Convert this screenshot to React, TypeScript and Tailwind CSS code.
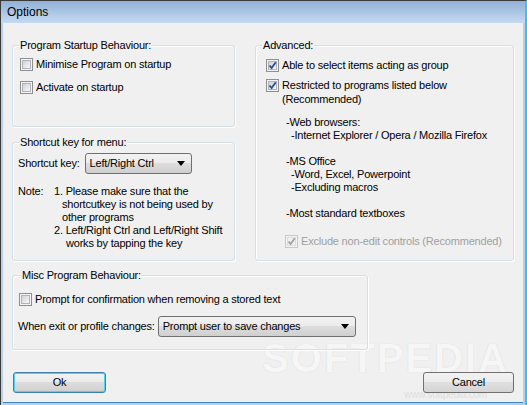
import React from 'react'

const font = "font-['Liberation_Sans',Arial,sans-serif]"

type CheckProps = {
  checked?: boolean
  disabled?: boolean
}

const CheckBox: React.FC<CheckProps> = ({ checked, disabled }) => {
  return (
    <span
      className={`flex h-[13px] w-[13px] shrink-0 items-center justify-center border bg-[#f4f4f4] p-[1px] ${
        disabled ? 'border-[#c8c8c8]' : 'border-[#8e8f8f]'
      }`}
    >
      <span
        className={`relative flex h-full w-full items-center justify-center border ${
          disabled
            ? 'border-[#dcdcdc] bg-[#f0f0f0]'
            : 'border-[#b0b4ba] bg-gradient-to-br from-[#cfd3d8] to-[#f7f7f7]'
        }`}
      >
        {checked && (
          <svg width="9" height="9" viewBox="0 0 9 9" className="absolute -left-[1px] -top-[1px]">
            <polyline
              points="1.5,4.5 3.6,7 7.8,1.2"
              fill="none"
              stroke={disabled ? '#a4a4a4' : '#2c4ea6'}
              strokeWidth="1.9"
            />
          </svg>
        )}
      </span>
    </span>
  )
}

type SelectProps = {
  value: string
  width: string
}

const Select: React.FC<SelectProps> = ({ value, width }) => {
  return (
    <div
      className={`flex h-[21px] ${width} items-center justify-between rounded-[3px] border border-[#707070] bg-[linear-gradient(#f2f2f2_0%,#ebebeb_50%,#dddddd_50%,#cfcfcf_100%)] pl-[4px] pr-[6px]`}
    >
      <span>{value}</span>
      <svg width="8" height="5" viewBox="0 0 8 5">
        <polygon points="0,0 8,0 4,5" fill="#000" />
      </svg>
    </div>
  )
}

type GroupProps = {
  label: string
  className: string
  labelLeft?: string
  children?: React.ReactNode
}

const Group: React.FC<GroupProps> = ({ label, className, labelLeft = 'left-[6px]', children }) => {
  return (
    <div
      className={`relative rounded-[3px] border border-[#d5dfe5] shadow-[inset_1px_1px_0_#ffffff,1px_1px_0_#ffffff] ${className}`}
    >
      <span className={`absolute -top-[7px] ${labelLeft} bg-[#f0f0f0] px-[1px] leading-[13px]`}>
        {label}
      </span>
      {children}
    </div>
  )
}

const Row: React.FC<{ checked?: boolean; disabled?: boolean; children: React.ReactNode }> = ({
  checked,
  disabled,
  children,
}) => (
  <div className="flex items-center gap-[3px] leading-[13px]">
    <CheckBox checked={checked} disabled={disabled} />
    <span className={disabled ? 'text-[#a0a0a0]' : ''}>{children}</span>
  </div>
)

export default function App() {
  return (
    <div
      className={`flex h-[405px] w-[527px] flex-col border-l border-r-2 border-t border-[#3a3a3a] border-r-[#47bde6] bg-[#b8cfe9] text-[11px] tracking-[-0.2px] text-black ${font}`}
    >
      <div className="flex h-[22px] shrink-0 items-center bg-gradient-to-b from-[#90b1d7] to-[#c6daf0] pl-[6px] text-[12px] tracking-normal">
        Options
      </div>

      <div className="relative mx-[2px] mb-[2px] flex flex-1 flex-col border-b border-[#3b84c8] bg-[#f0f0f0] pl-[9px] pr-[9px] pt-[22px]">
        <div className="pointer-events-none absolute bottom-[2px] right-[14px] flex flex-col items-end">
          <span className="text-[40px] font-bold leading-[40px] tracking-[2px] text-[#f6f6f6] [text-shadow:0_0_1px_#cfcfcf]">
            SOFTPEDIA
          </span>
          <span className="mr-[22px] mt-[12px] text-[10px] leading-[10px] text-[#dedede]">
            www.softpedia.com
          </span>
        </div>

        <div className="relative flex gap-[20px]">
          <div className="flex w-[223px] flex-col">
            <Group label="Program Startup Behaviour:" className="h-[82px] pl-[7px] pt-[12px]">
              <div className="flex flex-col gap-[10px]">
                <Row>Minimise Program on startup</Row>
                <Row>Activate on startup</Row>
              </div>
            </Group>

            <Group label="Shortcut key for menu:" className="mt-[15px] h-[119px] pl-[5px] pt-[10px]">
              <div className="flex items-center gap-[5px]">
                <span>Shortcut key:</span>
                <Select value="Left/Right Ctrl" width="w-[107px]" />
              </div>
              <div className="mt-[11px] leading-[13px]">
                <div className="flex">
                  <span className="w-[36px]">Note:</span>
                  <span>1. Please make sure that the</span>
                </div>
                <div className="pl-[44px]">shortcutkey is not being used by</div>
                <div className="pl-[44px]">other programs</div>
                <div className="pl-[36px]">2. Left/Right Ctrl and Left/Right Shift</div>
                <div className="pl-[48px]">works by tapping the key</div>
              </div>
            </Group>
          </div>

          <Group label="Advanced:" className="h-[216px] w-[259px] pl-[10px] pt-[13px]">
            <Row checked>Able to select items acting as group</Row>
            <div className="mt-[6px] flex gap-[3px] leading-[14px]">
              <span className="mt-[1px]">
                <CheckBox checked />
              </span>
              <span>
                Restricted to programs listed below
                <br />
                (Recommended)
              </span>
            </div>
            <div className="mt-[10px] pl-[20px] leading-[13px]">
              <div>-Web browsers:</div>
              <div className="pl-[5px]">-Internet Explorer / Opera / Mozilla Firefox</div>
              <div className="h-[13px]" />
              <div>-MS Office</div>
              <div className="pl-[5px]">-Word, Excel, Powerpoint</div>
              <div className="pl-[5px]">-Excluding macros</div>
              <div className="h-[13px]" />
              <div>-Most standard textboxes</div>
            </div>
            <div className="mt-[15px] pl-[19px]">
              <Row checked disabled>
                Exclude non-edit controls (Recommended)
              </Row>
            </div>
          </Group>
        </div>

        <Group
          label="Misc Program Behaviour:"
          labelLeft="left-[8px]"
          className="mt-[14px] h-[75px] w-[356px] pl-[6px] pt-[17px]"
        >
          <Row>Prompt for confirmation when removing a stored text</Row>
          <div className="-ml-[1px] mt-[10px] flex items-center gap-[3px]">
            <span>When exit or profile changes:</span>
            <Select value="Prompt user to save changes" width="w-[198px]" />
          </div>
        </Group>

        <div className="relative mt-[22px] flex items-center">
          <button
            type="button"
            className="ml-[1px] flex h-[21px] w-[93px] items-center justify-center rounded-[3px] border border-[#3c7fb1] bg-[linear-gradient(#f2f2f2_0%,#ebebeb_50%,#dddddd_50%,#cfcfcf_100%)] shadow-[inset_0_0_0_1px_#4fd2f6]"
          >
            Ok
          </button>
          <button
            type="button"
            className="ml-auto flex h-[21px] w-[91px] items-center justify-center rounded-[3px] border border-[#707070] bg-[linear-gradient(rgba(242,242,242,0.85)_0%,rgba(235,235,235,0.85)_50%,rgba(221,221,221,0.85)_50%,rgba(207,207,207,0.85)_100%)]"
          >
            Cancel
          </button>
        </div>
      </div>
    </div>
  )
}
